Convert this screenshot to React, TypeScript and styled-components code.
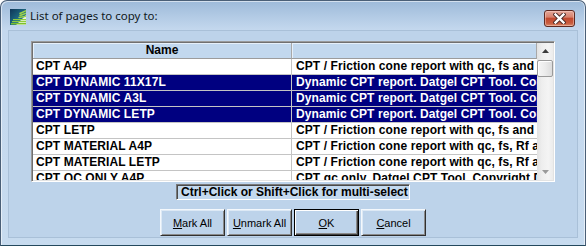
import React from 'react';
import styled, { createGlobalStyle, css } from 'styled-components';

const Global = createGlobalStyle`
  html, body { margin: 0; padding: 0; background: #ffffff; }
  body { font-family: "Liberation Sans", Arial, sans-serif; }
  * { box-sizing: border-box; }
`;

const BODY = '#bdd3ea';

const Window = styled.div`
  width: 586px;
  height: 246px;
  border: 1px solid #4a5f77;
  border-bottom-color: #24495d;
  border-radius: 7px 7px 0 0;
  background: linear-gradient(to bottom, #9dbad9 0px, #b3cbe5 16px, #c4d8ee 29px, #c7dbef 100%);
  box-shadow: inset 1px 1px 0 rgba(255, 255, 255, 0.55), inset -1px 0 0 rgba(255, 255, 255, 0.55);
  display: flex;
  flex-direction: column;
  padding: 0 7px 7px 7px;
`;

const TitleBar = styled.div`
  height: 29px;
  display: flex;
  align-items: flex-start;
  padding-left: 2px;
`;

const TitleIcon = styled.svg`
  width: 16px;
  height: 16px;
  margin-top: 8px;
  flex: none;
`;

const TitleText = styled.div`
  margin-left: 4px;
  margin-top: 7px;
  font-family: "Noto Sans", "Open Sans", sans-serif;
  font-size: 11.5px;
  line-height: 16px;
  color: #101820;
  flex: 1;
`;

const CloseButton = styled.div`
  width: 31px;
  height: 17px;
  margin-top: 9px;
  margin-right: 3px;
  border: 1px solid #5e2a22;
  border-radius: 3px;
  background: linear-gradient(to bottom, #e4a89a 0%, #d7826e 40%, #c24a30 50%, #c75a3d 80%, #d98a6a 100%);
  box-shadow: inset 0 0 0 1px rgba(255, 220, 210, 0.45);
  display: flex;
  align-items: center;
  justify-content: center;
`;

const Client = styled.div`
  flex: 1;
  background: ${BODY};
  border: 1px solid #a9c0d8;
  display: flex;
  flex-direction: column;
  align-items: center;
  padding: 10px 22px 0 22px;
`;

const ListView = styled.div`
  align-self: stretch;
  height: 141px;
  border-style: solid;
  border-width: 1px;
  border-color: #9a9a9a #ffffff #ffffff #9a9a9a;
  box-shadow: inset 1px 1px 0 #707070, inset -1px -1px 0 #e3e3e3;
  padding: 1px;
  background: #ffffff;
  display: flex;
  overflow: hidden;
`;

const Grid = styled.div`
  flex: 1;
  display: grid;
  grid-template-columns: 259px 1fr;
  grid-auto-rows: 16px;
  align-content: start;
  overflow: hidden;
  font-size: 12px;
  font-weight: bold;
`;

const HeaderCell = styled.div<{ $center?: boolean }>`
  background: #c2d8ee;
  border-bottom: 1px solid #9c9c9c;
  border-right: 1px solid #a8a8a8;
  box-shadow: inset 1px 1px 0 #e6f0fa;
  line-height: 15px;
  color: #000;
  text-align: ${(p) => (p.$center ? 'center' : 'left')};
  &:last-child {
    border-right: none;
  }
`;

const Cell = styled.div<{ $selected?: boolean; $first?: boolean }>`
  line-height: 15px;
  height: 16px;
  white-space: nowrap;
  overflow: hidden;
  padding-left: ${(p) => (p.$first ? '3px' : '4px')};
  border-bottom: 1px solid #c4c4c4;
  border-right: ${(p) => (p.$first ? '1px solid #c4c4c4' : 'none')};
  letter-spacing: 0.1px;
  ${(p) =>
    p.$selected
      ? css`
          background: #000080;
          color: #ffffff;
        `
      : css`
          background: #ffffff;
          color: #000000;
        `}
`;

const ScrollBar = styled.div`
  width: 16px;
  flex: none;
  display: flex;
  flex-direction: column;
  background: linear-gradient(to right, #e2e2e2 0%, #eeeeee 30%, #f4f4f4 70%, #ececec 100%);
`;

const ArrowButton = styled.div`
  height: 16px;
  flex: none;
  display: flex;
  align-items: center;
  justify-content: center;
`;

const Thumb = styled.div`
  height: 17px;
  margin: 1px 0 0 0;
  border: 1px solid #9a9a9a;
  border-radius: 2px;
  background: linear-gradient(to right, #f6f6f6 0%, #ececec 50%, #dcdcdc 100%);
  box-shadow: inset 1px 1px 0 #ffffff;
`;

const Track = styled.div`
  flex: 1;
`;

const Hint = styled.div`
  margin-top: 2px;
  width: 234px;
  height: 16px;
  border-style: solid;
  border-width: 1px;
  border-color: #7a7a7a #ffffff #ffffff #7a7a7a;
  box-shadow: inset 1px 1px 0 #4a4a4a;
  background: #c3d9ef;
  font-size: 12px;
  font-weight: bold;
  line-height: 14px;
  padding-left: 4px;
  color: #000;
  white-space: nowrap;
`;

const ButtonRow = styled.div`
  margin-top: 9px;
  display: flex;
  gap: 2px;
`;

const Button = styled.div<{ $default?: boolean }>`
  width: 65px;
  height: 27px;
  display: flex;
  align-items: center;
  justify-content: center;
  font-size: 11px;
  color: #000;
  background: ${BODY};
  border-style: solid;
  border-width: 1px;
  ${(p) =>
    p.$default
      ? css`
          border-color: #000;
          box-shadow: inset 1px 1px 0 #ffffff, inset -1px -1px 0 #404040, inset -2px -2px 0 #8a8a8a;
        `
      : css`
          border-color: #f4f8fc #303030 #303030 #f4f8fc;
          box-shadow: inset 1px 1px 0 #dde9f5, inset -1px -1px 0 #8a8a8a;
        `}
  u {
    text-decoration: underline;
  }
`;

type Row = { name: string; desc: string; selected?: boolean };

const rows: Row[] = [
  { name: 'CPT A4P', desc: 'CPT / Friction cone report with qc, fs and Rf' },
  { name: 'CPT DYNAMIC 11X17L', desc: 'Dynamic CPT report. Datgel CPT Tool. Copyright', selected: true },
  { name: 'CPT DYNAMIC A3L', desc: 'Dynamic CPT report. Datgel CPT Tool. Copyright', selected: true },
  { name: 'CPT DYNAMIC LETP', desc: 'Dynamic CPT report. Datgel CPT Tool. Copyright', selected: true },
  { name: 'CPT LETP', desc: 'CPT / Friction cone report with qc, fs and Rf' },
  { name: 'CPT MATERIAL A4P', desc: 'CPT / Friction cone report with qc, fs, Rf and material' },
  { name: 'CPT MATERIAL LETP', desc: 'CPT / Friction cone report with qc, fs, Rf and material' },
  { name: 'CPT QC ONLY A4P', desc: 'CPT qc only. Datgel CPT Tool. Copyright Datgel' },
];

const Logo = () => (
  <TitleIcon viewBox="0 0 16 16">
    <defs>
      <linearGradient id="lg" x1="0" y1="0" x2="1" y2="1">
        <stop offset="0" stopColor="#0e3557" />
        <stop offset="0.6" stopColor="#1f6f86" />
        <stop offset="1" stopColor="#3b9aa3" />
      </linearGradient>
    </defs>
    <rect x="0" y="0" width="16" height="16" fill="url(#lg)" />
    <path d="M6 16 L16 6 L16 16 Z" fill="#e8f4d8" />
    <rect x="3" y="10" width="13" height="1.2" fill="#8ecb3c" />
    <rect x="2" y="12" width="14" height="1.2" fill="#8ecb3c" />
    <rect x="1" y="14" width="15" height="1.4" fill="#7dc02c" />
    <path d="M9 4 L16 1 L16 2.4 L10 5.5 Z" fill="#9fd24a" />
    <path d="M9 6 L16 3.5 L16 5 L10 7.5 Z" fill="#9fd24a" />
    <path d="M8 8 L16 6.5 L16 8 L9 9.3 Z" fill="#9fd24a" />
  </TitleIcon>
);

const CloseX = () => (
  <svg width="13" height="11" viewBox="0 0 13 11">
    <path d="M2.5 1.5 L10.5 9.5 M10.5 1.5 L2.5 9.5" stroke="#4a2a26" strokeWidth="4.2" strokeLinecap="square" />
    <path d="M2.5 1.5 L10.5 9.5 M10.5 1.5 L2.5 9.5" stroke="#ffffff" strokeWidth="2.4" strokeLinecap="square" />
  </svg>
);

const ArrowIcon = ({ down }: { down?: boolean }) => (
  <svg width="7" height="4" viewBox="0 0 7 4">
    <path d={down ? 'M0 0 L7 0 L3.5 4 Z' : 'M0 4 L7 4 L3.5 0 Z'} fill={down ? '#9a9a9a' : '#3c3c3c'} />
  </svg>
);

export default function App() {
  return (
    <>
      <Global />
      <Window>
        <TitleBar>
          <Logo />
          <TitleText>List of pages to copy to:</TitleText>
          <CloseButton>
            <CloseX />
          </CloseButton>
        </TitleBar>
        <Client>
          <ListView>
            <Grid>
              <HeaderCell $center>Name</HeaderCell>
              <HeaderCell />
              {rows.map((r) => (
                <React.Fragment key={r.name}>
                  <Cell $first $selected={r.selected}>
                    {r.name}
                  </Cell>
                  <Cell $selected={r.selected}>{r.desc}</Cell>
                </React.Fragment>
              ))}
            </Grid>
            <ScrollBar>
              <ArrowButton>
                <ArrowIcon />
              </ArrowButton>
              <Thumb />
              <Track />
              <ArrowButton>
                <ArrowIcon down />
              </ArrowButton>
            </ScrollBar>
          </ListView>
          <Hint>Ctrl+Click or Shift+Click for multi-select</Hint>
          <ButtonRow>
            <Button>
              <span>
                <u>M</u>ark All
              </span>
            </Button>
            <Button>
              <span>
                <u>U</u>nmark All
              </span>
            </Button>
            <Button $default>
              <span>
                <u>O</u>K
              </span>
            </Button>
            <Button>
              <span>
                <u>C</u>ancel
              </span>
            </Button>
          </ButtonRow>
        </Client>
      </Window>
    </>
  );
}
